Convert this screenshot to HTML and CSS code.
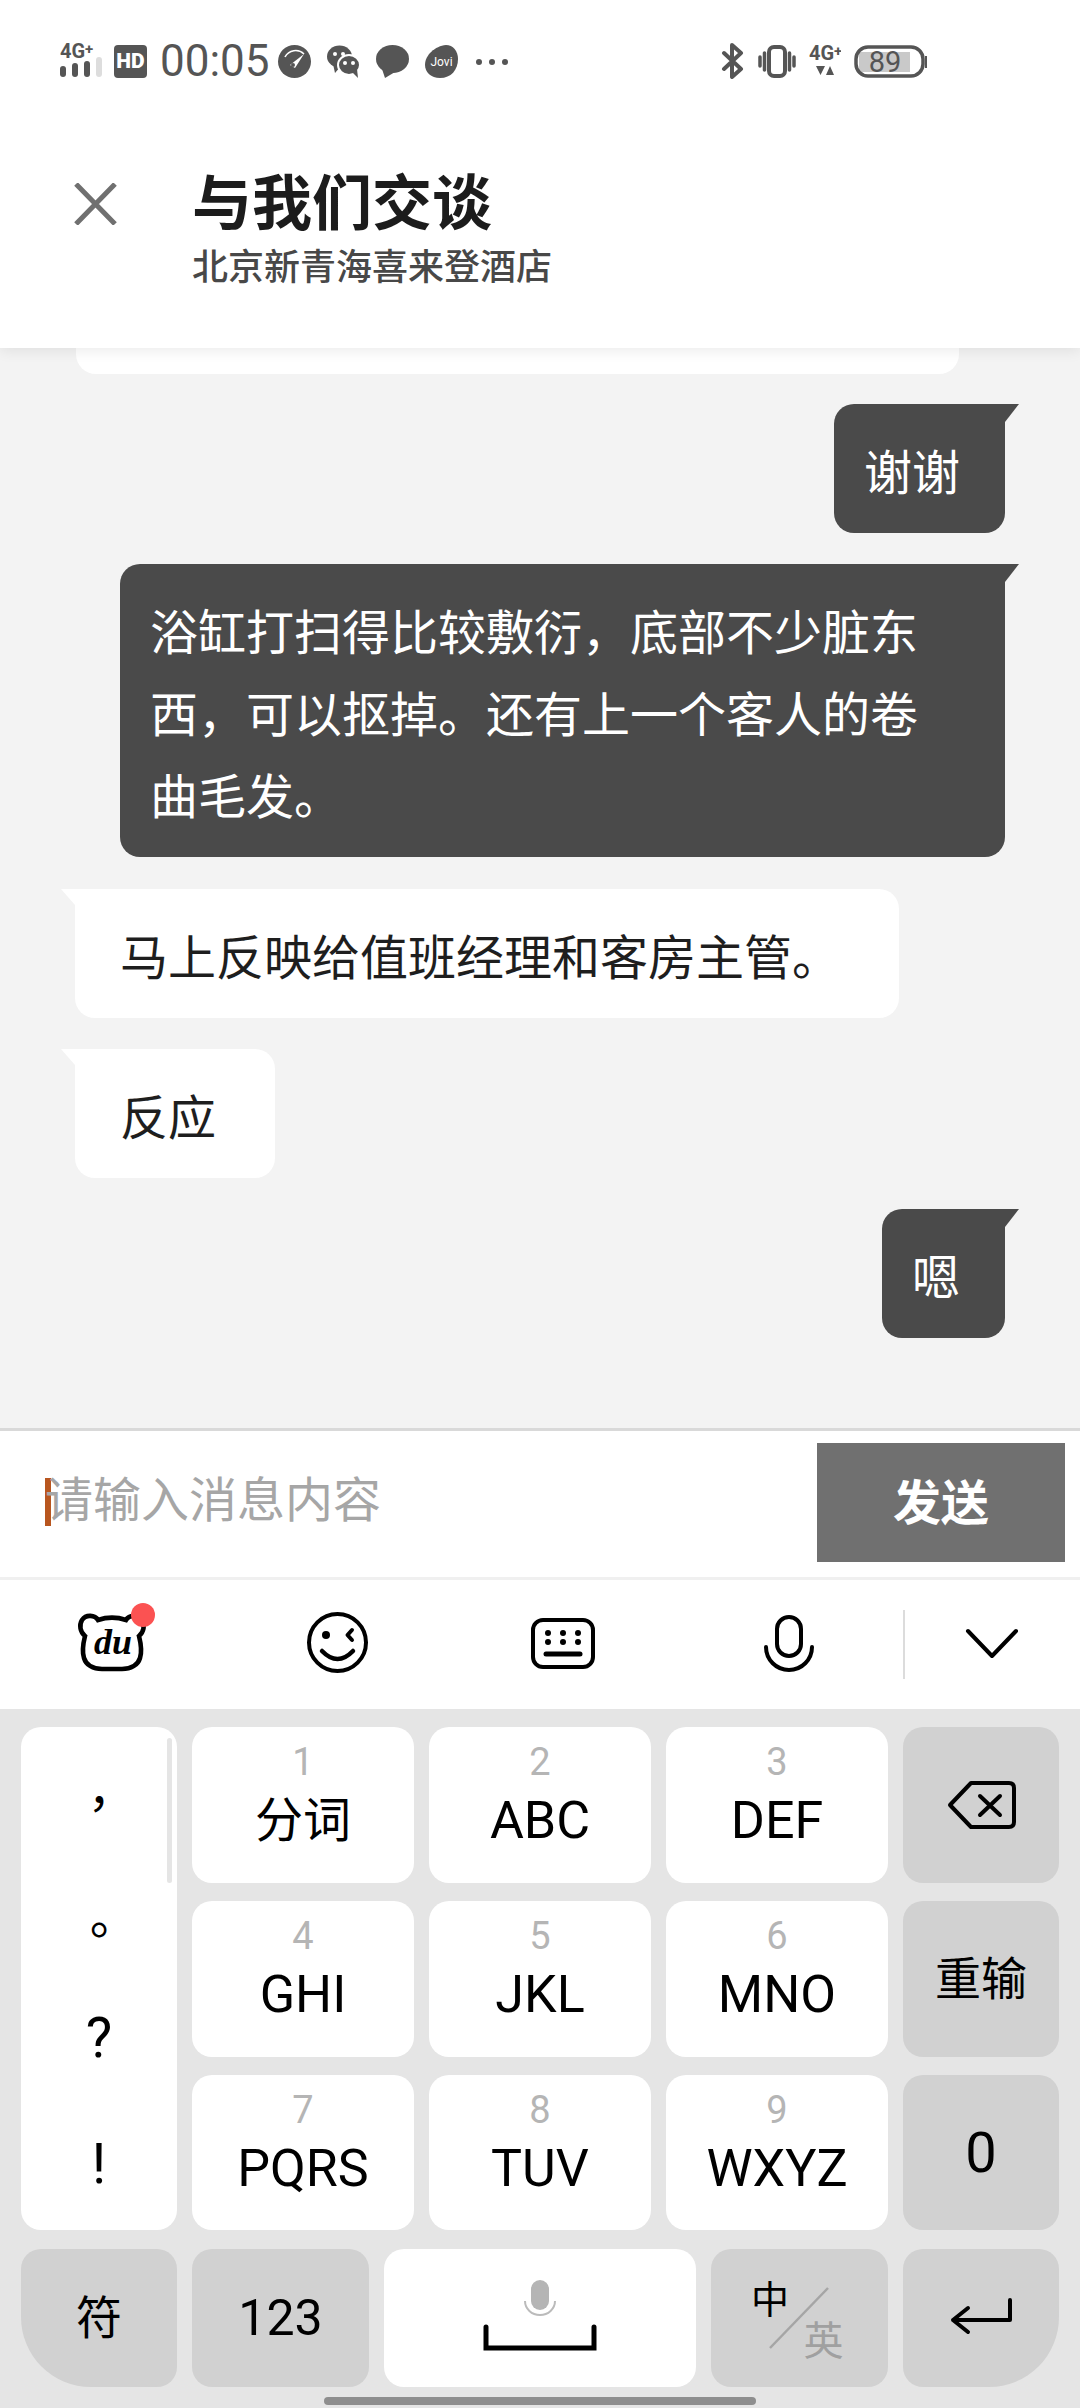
FILE: index.html
```html
<!DOCTYPE html>
<html lang="zh-CN">
<head>
<meta charset="UTF-8">
<title>与我们交谈</title>
<link rel="stylesheet" href="styles.css">
</head>
<body>

<header class="top">
  <div class="status">
    <div class="status-left">
      <svg class="ic-signal" width="42" height="68" viewBox="0 -16 42 68">
        <text x="0" y="17" class="tiny">4G<tspan class="tiny-plus" dy="-4">+</tspan></text>
        <rect x="0" y="25" width="6" height="11" rx="3" fill="#555"/>
        <rect x="12" y="22" width="6" height="14" rx="3" fill="#555"/>
        <rect x="24" y="20" width="6" height="16" rx="3" fill="#555"/>
        <rect x="36" y="16" width="6" height="20" rx="3" fill="#ddd"/>
      </svg>
      <svg class="ic-hd" width="33" height="33" viewBox="0 0 33 33">
        <rect width="33" height="33" rx="4" fill="#555"/>
        <text x="16.5" y="23" class="hd">HD</text>
      </svg>
      <span class="clock">00:05</span>
      <svg width="33" height="33" viewBox="0 0 33 33">
        <circle cx="16.5" cy="16.5" r="16.5" fill="#555"/>
        <path d="M7 12A12 12 0 0 1 26 9" fill="none" stroke="#fff" stroke-width="1.6"/>
        <path d="M12 20L26 9L17 23Z" fill="#fff"/>
        <circle cx="15" cy="20" r="2" fill="#555"/>
      </svg>
      <svg width="33" height="33" viewBox="0 0 33 33">
        <ellipse cx="12.5" cy="11.5" rx="12.5" ry="11" fill="#555"/>
        <path d="M6 19L8 28L14 21Z" fill="#555"/>
        <ellipse cx="22" cy="20" rx="11" ry="10" fill="#555" stroke="#fff" stroke-width="2"/>
        <path d="M25 27L31 33L30 24Z" fill="#555"/>
        <circle cx="8" cy="9" r="2" fill="#fff"/>
        <circle cx="16" cy="9" r="2" fill="#fff"/>
        <circle cx="18" cy="18" r="2" fill="#fff"/>
        <circle cx="26" cy="18" r="2" fill="#fff"/>
      </svg>
      <svg width="33" height="33" viewBox="0 0 33 33">
        <ellipse cx="16.5" cy="14" rx="16.5" ry="14" fill="#555"/>
        <path d="M6 24L9 33L19 27Z" fill="#555"/>
      </svg>
      <svg width="33" height="33" viewBox="0 0 33 33">
        <path d="M21 0C28 0 33 6 33 14C33 25 26 33 15 33C6 33 0 27 0 20C0 10 10 1 21 0Z" fill="#555"/>
        <text x="16.5" y="21" class="jovi">Jovi</text>
      </svg>
      <svg width="35" height="33" viewBox="0 0 35 33" fill="#555">
        <circle cx="5" cy="17" r="3"/>
        <circle cx="18" cy="17" r="3"/>
        <circle cx="31" cy="17" r="3"/>
      </svg>
    </div>
    <div class="status-right">
      <svg width="24" height="36" viewBox="0 0 24 36" fill="none" stroke="#555" stroke-width="4" stroke-linecap="round" stroke-linejoin="round">
        <path d="M3 10L20 26L11 34V2L20 10L3 26"/>
      </svg>
      <svg width="38" height="33" viewBox="0 0 38 33" fill="none" stroke="#555" stroke-width="3.5" stroke-linecap="round">
        <rect x="11" y="2" width="16" height="29" rx="5" stroke-width="4"/>
        <path d="M2 12V21M6.5 8V25M31.5 8V25M36 12V21"/>
      </svg>
      <svg width="32" height="65" viewBox="0 -16 32 65">
        <text x="0" y="15" class="tiny">4G<tspan class="tiny-plus" dy="-4">+</tspan></text>
        <path d="M7 21H16L11.5 30ZM17 30H25L21 21Z" fill="#555"/>
      </svg>
      <svg width="73" height="33" viewBox="0 0 73 33">
        <rect x="5" y="7" width="51" height="20" fill="#c9c9c9"/>
        <rect x="2" y="2" width="67" height="29" rx="12" fill="none" stroke="#555" stroke-width="3.5"/>
        <rect x="71" y="11" width="2" height="12" fill="#555"/>
        <text x="31" y="27" class="batt">89</text>
      </svg>
    </div>
  </div>

  <div class="nav">
    <svg class="close" width="43" height="42" viewBox="0 0 43 42" stroke="#707070" stroke-width="5">
      <path d="M2 1L41 41M41 1L2 41"/>
    </svg>
    <div class="titles">
      <h1>与我们交谈</h1>
      <p>北京新青海喜来登酒店</p>
    </div>
  </div>
</header>

<main class="chat">
  <div class="stub"></div>
  <div class="msg me">谢谢</div>
  <div class="msg me">浴缸打扫得比较敷衍，底部不少脏东西，可以抠掉。还有上一个客人的卷曲毛发。</div>
  <div class="msg them">马上反映给值班经理和客房主管。</div>
  <div class="msg them">反应</div>
  <div class="msg me">嗯</div>
</main>

<div class="composer">
  <span class="caret"></span>
  <span class="placeholder">请输入消息内容</span>
  <button class="send">发送</button>
</div>

<div class="toolbar">
  <div class="tool">
    <svg width="101" height="101" viewBox="0 0 101 101" fill="none" stroke="#000" stroke-width="4.6">
      <path d="M36 26C33 21 24 20 20 26C17 31 18 38 23 42C21 50 20 58 22 64C24 71 31 75 40 75H60C69 75 76 71 78 64C80 58 79 50 77 42C82 38 83 31 80 26C76 20 67 21 64 26C55 23 45 23 36 26Z"/>
      <text x="51" y="60" class="du">du</text>
      <circle cx="81" cy="21" r="12" fill="#fb5252" stroke="none"/>
    </svg>
  </div>
  <div class="tool">
    <svg width="101" height="101" viewBox="0 0 101 101" fill="none" stroke="#000" stroke-width="4" stroke-linecap="round" stroke-linejoin="round">
      <circle cx="50.5" cy="48.5" r="28.5"/>
      <circle cx="39" cy="41" r="4" fill="#000" stroke="none"/>
      <path d="M65 36L60.5 41L65 46"/>
      <path d="M35 57Q50.5 73 66 57" stroke-width="4.5"/>
    </svg>
  </div>
  <div class="tool">
    <svg width="101" height="101" viewBox="0 0 101 101" fill="none" stroke="#000" stroke-width="4" stroke-linecap="round">
      <rect x="21" y="26" width="60" height="47" rx="10"/>
      <g fill="#000" stroke="none">
        <circle cx="36" cy="39" r="3"/><circle cx="51" cy="39" r="3"/><circle cx="66" cy="39" r="3"/>
        <circle cx="36" cy="48" r="3"/><circle cx="51" cy="48" r="3"/><circle cx="66" cy="48" r="3"/>
      </g>
      <path d="M34 60H68" stroke-width="5"/>
    </svg>
  </div>
  <div class="tool">
    <svg width="101" height="101" viewBox="0 0 101 101" fill="none" stroke="#000" stroke-width="4" stroke-linecap="round">
      <rect x="40" y="23" width="24" height="39" rx="12"/>
      <path d="M29 53a23 23 0 0 0 46 0"/>
    </svg>
  </div>
  <span class="tool-sep"></span>
  <div class="tool tool-last">
    <svg width="101" height="101" viewBox="0 0 101 101" fill="none" stroke="#000" stroke-width="4" stroke-linecap="round" stroke-linejoin="round">
      <path d="M26 37L50 62L74 37"/>
    </svg>
  </div>
</div>

<section class="keyboard">
  <div class="keys">
    <div class="punct">
      <span class="scrollbar"></span>
      <span class="p p-comma">，</span>
      <span class="p p-dot">。</span>
      <span class="p p-ask">?</span>
      <span class="p p-bang">!</span>
    </div>
    <div class="key pad"><span class="num">1</span><span class="lbl cn">分词</span></div>
    <div class="key pad"><span class="num">2</span><span class="lbl">ABC</span></div>
    <div class="key pad"><span class="num">3</span><span class="lbl">DEF</span></div>
    <div class="key fn">
      <svg width="80" height="60" viewBox="0 0 80 60" fill="none" stroke="#000" stroke-width="4" stroke-linecap="round" stroke-linejoin="round">
        <path d="M9 30L30 8H68Q73 8 73 13V47Q73 52 68 52H30Z"/>
        <path d="M39 21L59 40M59 21L39 40"/>
      </svg>
    </div>
    <div class="key pad"><span class="num">4</span><span class="lbl">GHI</span></div>
    <div class="key pad"><span class="num">5</span><span class="lbl">JKL</span></div>
    <div class="key pad"><span class="num">6</span><span class="lbl">MNO</span></div>
    <div class="key fn"><span class="lbl">重输</span></div>
    <div class="key pad"><span class="num">7</span><span class="lbl">PQRS</span></div>
    <div class="key pad"><span class="num">8</span><span class="lbl">TUV</span></div>
    <div class="key pad"><span class="num">9</span><span class="lbl">WXYZ</span></div>
    <div class="key fn"><span class="lbl zero">0</span></div>
  </div>

  <div class="bottom-row">
    <div class="key fn k-sym"><span class="lbl">符</span></div>
    <div class="key fn k-123"><span class="lbl">123</span></div>
    <div class="key k-space">
      <svg width="120" height="76" viewBox="0 0 120 76" fill="none">
        <rect x="51" y="0" width="18" height="30" rx="9" fill="#b5b5b5"/>
        <path d="M45 21a15 14 0 0 0 30 0" stroke="#bbb" stroke-width="2"/>
        <path d="M6 47V68H114V47" stroke="#000" stroke-width="5" stroke-linecap="round"/>
      </svg>
    </div>
    <div class="key fn k-lang">
      <span class="zh">中</span>
      <span class="en">英</span>
      <svg class="slash" width="60" height="62" viewBox="0 0 60 62"><path d="M59 1L1 61" stroke="#a5a5a5" stroke-width="2.5"/></svg>
    </div>
    <div class="key fn k-enter">
      <svg width="80" height="60" viewBox="0 0 80 60" fill="none" stroke="#000" stroke-width="4" stroke-linecap="round" stroke-linejoin="round">
        <path d="M69 12V32H12M27 20L12 32L27 44"/>
      </svg>
    </div>
  </div>

  <div class="home-bar"></div>
</section>

</body>
</html>
```

FILE: styles.css
```css
*,*::before,*::after{box-sizing:border-box;margin:0;padding:0}
body{
  width:1080px;
  height:2408px;
  overflow:hidden;
  display:flex;
  flex-direction:column;
  background:#fff;
  font-family:"Noto Sans CJK SC",Roboto,sans-serif;
}

/* === STATUS + TITLE === */
.top{
  position:relative;
  z-index:2;
  height:348px;
  flex:none;
  background:#fff;
  box-shadow:0 2px 14px rgba(0,0,0,.09);
}
.status{
  height:122px;
  display:flex;
  align-items:center;
  justify-content:space-between;
  padding:0 153px 0 60px;
}
.status-left,.status-right{display:flex;align-items:center}
.status-left{gap:16px}
.status-right{gap:13px}
.ic-signal{margin-right:-4px;margin-top:-4px}
.clock{
  width:102px;
  margin-left:-3px;
  font:400 44px/1 Roboto,sans-serif;
  color:#555;
  white-space:nowrap;
}
.tiny{font:700 20px Roboto,sans-serif;fill:#555}
.tiny-plus{font-size:15px}
.hd{font:900 21px Roboto,sans-serif;fill:#fff;text-anchor:middle}
.jovi{font:400 12px Roboto,sans-serif;fill:#fff;text-anchor:middle}
.batt{font:400 29px Roboto,sans-serif;fill:#555;text-anchor:middle}

.nav{
  display:flex;
  align-items:flex-start;
  padding:37px 0 0 74px;
}
.close{margin:24px 75px 0 0;flex:none}
.titles h1{
  font-size:60px;
  line-height:80px;
  font-weight:700;
  color:#1c1c1c;
}
.titles p{
  margin-top:3px;
  font-size:36px;
  line-height:44px;
  font-weight:500;
  color:#484848;
}

/* === CHAT === */
.chat{
  height:1080px;
  flex:none;
  display:flex;
  flex-direction:column;
  gap:31px;
  padding:0 75px;
  background:#f3f3f3;
  overflow:hidden;
}
.stub{
  height:26px;
  flex:none;
  margin:0 46px -1px 1px;
  background:#fff;
  border-radius:0 0 20px 20px;
}
.msg{
  position:relative;
  flex:none;
  font-size:48px;
  line-height:82px;
  max-width:885px;
}
.me{
  align-self:flex-end;
  padding:24px 45px 23px 30px;
  background:#4a4a4a;
  color:#fff;
  border-radius:20px 0 20px 20px;
}
.me::after{
  content:"";
  position:absolute;
  top:0;
  left:100%;
  width:14px;
  height:18px;
  background:#4a4a4a;
  clip-path:polygon(0 0,100% 0,0 100%);
}
.them{
  align-self:flex-start;
  padding:24px 59px 23px 45px;
  background:#fff;
  color:#1e1e1e;
  border-radius:0 20px 20px 20px;
}
.me + .them{margin-top:1px}
.them::after{
  content:"";
  position:absolute;
  top:0;
  right:100%;
  width:14px;
  height:16px;
  background:#fff;
  clip-path:polygon(0 0,100% 0,100% 100%);
}

/* === INPUT === */
.composer{
  height:152px;
  flex:none;
  display:flex;
  align-items:flex-start;
  padding:12px 15px 0 45px;
  background:#fff;
  border-top:3px solid #d9d9d9;
  border-bottom:3px solid #f0f0f0;
}
.caret{
  flex:none;
  width:6px;
  height:48px;
  margin:35px -6px 0 0;
  background:#b8561f;
}
.placeholder{
  flex:1;
  margin-top:20px;
  font-size:48px;
  line-height:66px;
  color:#a6a6a6;
}
.send{
  flex:none;
  width:248px;
  height:119px;
  padding-bottom:8px;
  border:0;
  background:#707070;
  color:#fff;
  font:700 48px "Noto Sans CJK SC",sans-serif;
}

/* === IME TOOLBAR === */
.toolbar{
  height:129px;
  flex:none;
  display:flex;
  align-items:center;
}
.tool{width:225px;display:flex;justify-content:center}
.tool-sep{
  flex:none;
  width:2px;
  height:69px;
  margin-left:3px;
  background:#dcdcdc;
}
.tool-last{width:175px}
.du{
  font:italic 700 36px "Liberation Serif",serif;
  fill:#000;
  stroke:none;
  text-anchor:middle;
}

/* === KEYBOARD === */
.keyboard{
  flex:1;
  padding:18px 21px 0;
  background:#e5e5e5;
}
.keys{
  display:grid;
  grid-template-columns:156px 222px 222px 222px 156px;
  grid-template-rows:156px 156px 155px;
  column-gap:15px;
  row-gap:18px;
}
.key{
  display:flex;
  flex-direction:column;
  align-items:center;
  justify-content:center;
  background:#fff;
  border-radius:20px;
  color:#000;
}
.pad{justify-content:flex-start;padding-top:15px}
.fn{background:#d1d1d1}
.num{
  font:400 38px/40px Roboto,sans-serif;
  color:#b5b5b5;
  margin-bottom:9px;
}
.lbl{
  font-family:Roboto,"Noto Sans CJK SC",sans-serif;
  font-size:52px;
  line-height:60px;
}
.cn{font-size:48px}
.fn .lbl{font-size:46px}
.fn .zero{font-size:56px}
.punct{
  position:relative;
  grid-row:1 / span 3;
  display:flex;
  flex-direction:column;
  background:#fff;
  border-radius:20px;
}
.scrollbar{
  position:absolute;
  top:11px;
  right:5px;
  width:5px;
  height:145px;
  background:#e5e5e5;
  border-radius:3px;
}
.p{
  flex:none;
  height:125.75px;
  display:flex;
  align-items:center;
  justify-content:center;
  font:400 56px Roboto,sans-serif;
  color:#000;
}
.p-comma,.p-dot{font:400 48px "Noto Sans CJK TC",sans-serif}
.p-comma{padding-top:20px}
.p-dot{padding-top:22px}
.p-ask{padding-bottom:6px}
.p-bang{padding-bottom:6px}

.bottom-row{
  display:flex;
  gap:15px;
  height:138px;
  margin-top:19px;
}
.k-sym{width:156px;border-bottom-left-radius:70px}
.k-123{width:177px}
.k-123 .lbl{font-size:50px}
.k-space{width:312px}
.k-lang{
  position:relative;
  width:177px;
  display:grid;
  grid-template-columns:1fr 1fr;
  grid-template-rows:48px 41px;
  padding:24px 32px 0 40px;
}
.zh{font-size:38px;line-height:48px;align-self:start;color:#000}
.en{grid-row:2;grid-column:2;font-size:40px;line-height:48px;align-self:end;color:#a0a0a0}
.slash{position:absolute;left:58px;top:38px}
.k-enter{width:156px;border-bottom-right-radius:70px}

.home-bar{
  width:432px;
  height:8px;
  margin:10px auto 0;
  background:#8e8e8e;
  border-radius:4px;
}
```
